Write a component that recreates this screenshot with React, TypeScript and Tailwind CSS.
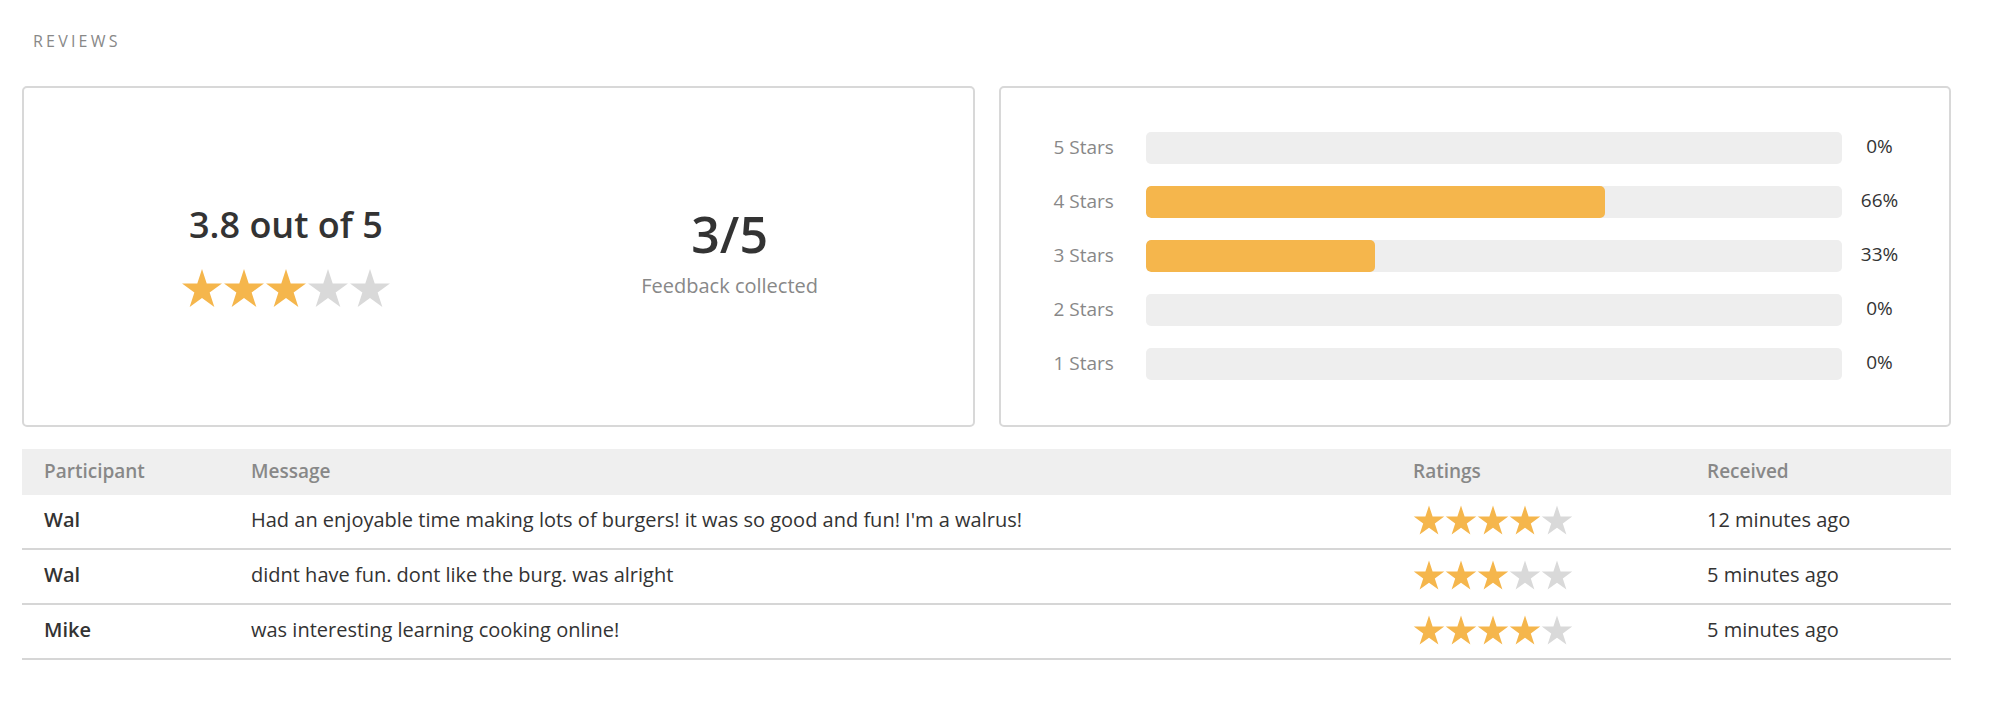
const GOLD = "#F5B64C";
const GREY = "#D9D9D9";

function Star({ size, filled }: { size: number; filled: boolean }) {
  return (
    <svg width={size} height={size} viewBox="0 0 100 100" className="shrink-0">
      <polygon
        points="50,4.77 61.23,39.32 97.55,39.32 68.17,60.67 79.39,95.22 50,73.87 20.61,95.22 31.83,60.67 2.45,39.32 38.77,39.32"
        fill={filled ? GOLD : GREY}
      />
    </svg>
  );
}

function Stars({ value, size }: { value: number; size: number }) {
  return (
    <div className="flex">
      {[1, 2, 3, 4, 5].map((i) => (
        <Star key={i} size={size} filled={i <= value} />
      ))}
    </div>
  );
}

const breakdown = [
  { label: "5 Stars", pct: 0 },
  { label: "4 Stars", pct: 66 },
  { label: "3 Stars", pct: 33 },
  { label: "2 Stars", pct: 0 },
  { label: "1 Stars", pct: 0 },
];

const reviews = [
  {
    name: "Wal",
    message: "Had an enjoyable time making lots of burgers! it was so good and fun! I'm a walrus!",
    rating: 4,
    received: "12 minutes ago",
  },
  { name: "Wal", message: "didnt have fun. dont like the burg. was alright", rating: 3, received: "5 minutes ago" },
  { name: "Mike", message: "was interesting learning cooking online!", rating: 4, received: "5 minutes ago" },
];

export default function App() {
  return (
    <div className="min-h-screen bg-white pl-[22px] pr-[39px] pt-[30px] font-['Open_Sans',sans-serif] text-[#333]">
      <h2 className="pl-[11px] text-[16px] leading-[22px] tracking-[3.2px] text-[#888]">REVIEWS</h2>

      <div className="mt-[34px] grid grid-cols-2 gap-[24px]">
        {/* summary */}
        <div className="grid h-[341px] grid-cols-2 items-center rounded-[5px] border-2 border-[#d8d8d8] pl-[40px] pr-[21px]">
          <div className="flex flex-col items-center">
            <div className="text-[36px] font-semibold leading-[40px]">3.8 out of 5</div>
            <div className="mt-[22px]">
              <Stars value={3} size={42} />
            </div>
          </div>
          <div className="flex flex-col items-center pb-[6px]">
            <div className="text-[50px] font-semibold leading-[50px]">3/5</div>
            <div className="mt-[14px] text-[20px] leading-[26px] text-[#888]">Feedback collected</div>
          </div>
        </div>

        {/* breakdown */}
        <div className="flex h-[341px] flex-col justify-center gap-[22px] rounded-[5px] border-2 border-[#d8d8d8] pb-[2px] pl-[53px] pr-[32px]">
          {breakdown.map((row) => (
            <div key={row.label} className="flex h-[32px] items-center">
              <div className="w-[92px] text-[19px] text-[#888]">{row.label}</div>
              <div className="h-[32px] flex-1 overflow-hidden rounded-[5px] bg-[#eeeeee]">
                <div className="h-full rounded-[5px] bg-[#F5B64C]" style={{ width: `${row.pct}%` }} />
              </div>
              <div className="w-[75px] pb-[2px] text-center text-[19px]">{row.pct}%</div>
            </div>
          ))}
        </div>
      </div>

      {/* table */}
      <div className="mt-[22px] text-[20px]">
        <div className="grid h-[46px] grid-cols-[207px_1162px_294px_1fr] items-center bg-[#efefef] pb-[2px] text-[19px] font-semibold text-[#888]">
          <div className="pl-[22px]">Participant</div>
          <div className="pl-[22px]">Message</div>
          <div className="pl-[22px]">Ratings</div>
          <div className="pl-[22px]">Received</div>
        </div>
        {reviews.map((r, i) => (
          <div
            key={i}
            className="grid h-[55px] grid-cols-[207px_1162px_294px_1fr] items-center border-b-2 border-[#d6d6d6] pb-[3px]"
          >
            <div className="pl-[22px] font-semibold">{r.name}</div>
            <div className="pl-[22px]">{r.message}</div>
            <div className="pl-[22px]">
              <Stars value={r.rating} size={32} />
            </div>
            <div className="pl-[22px]">{r.received}</div>
          </div>
        ))}
      </div>
    </div>
  );
}
